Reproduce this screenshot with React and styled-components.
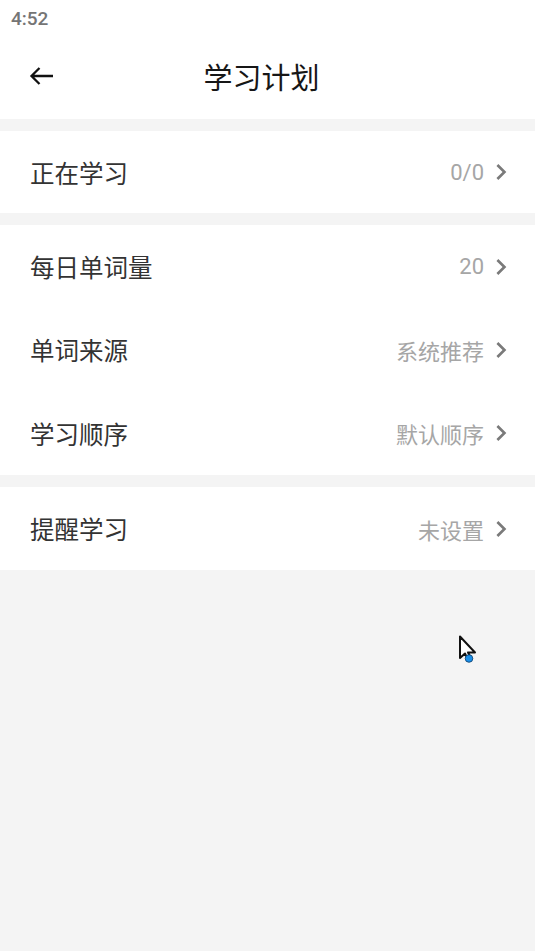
import React from 'react';
import styled, { createGlobalStyle } from 'styled-components';
import { MdChevronRight } from 'react-icons/md';

const GlobalStyle = createGlobalStyle`
  html, body {
    margin: 0;
    padding: 0;
    background: #f4f4f4;
    font-family: Roboto, "Noto Sans CJK SC", sans-serif;
  }
`;

const Page = styled.div`
  position: relative;
  width: 535px;
  min-height: 951px;
  background: #f4f4f4;
`;

const StatusBar = styled.div`
  height: 37px;
  padding-left: 11px;
  display: flex;
  align-items: center;
  background: #fff;
  color: #757575;
  font-size: 19px;
  font-weight: 500;
`;

const Header = styled.header`
  height: 82px;
  display: grid;
  grid-template-columns: 80px 1fr 92px;
  align-items: center;
  background: #fff;
  margin-bottom: 12px;
`;

const BackButton = styled.button`
  border: none;
  background: none;
  padding: 0 0 0 29px;
  display: flex;
  align-items: center;
  color: #111;
  margin-top: -4px;
`;

const Title = styled.h1`
  margin: 0 0 4px;
  text-align: center;
  font-size: 29px;
  font-weight: 400;
  color: #161616;
  font-family: "Noto Sans CJK SC", sans-serif;
`;

const Section = styled.section`
  background: #fff;
  margin-bottom: 12px;
`;

const Row = styled.div`
  height: ${(p) => p.$h || 83}px;
  display: flex;
  align-items: center;
  justify-content: space-between;
  padding: 0 18px 0 30px;
`;

const Label = styled.span`
  font-size: 24.5px;
  font-weight: 400;
  color: #333;
  font-family: "Noto Sans CJK SC", sans-serif;
`;

const Value = styled.span`
  display: flex;
  align-items: center;
  gap: 1px;
  font-size: 22px;
  color: #a6a6a6;
  font-family: Roboto, "Noto Sans CJK SC", sans-serif;
  svg {
    color: #7a7a7a;
    font-size: 32px;
  }
`;

const Cursor = styled.svg`
  position: absolute;
  left: 456px;
  top: 634px;
`;

const sections = [
  [{ label: '正在学习', value: '0/0', h: 82 }],
  [
    { label: '每日单词量', value: '20' },
    { label: '单词来源', value: '系统推荐' },
    { label: '学习顺序', value: '默认顺序', h: 84 },
  ],
  [{ label: '提醒学习', value: '未设置', h: 83 }],
];

export default function App() {
  return (
    <Page>
      <GlobalStyle />
      <StatusBar>4:52</StatusBar>
      <Header>
        <BackButton>
          <svg width="26" height="20" viewBox="0 0 26 20">
            <path d="M24 10 H2.5 M10.5 2 L2.5 10 L10.5 18" fill="none" stroke="#111" strokeWidth="2.3" />
          </svg>
        </BackButton>
        <Title>学习计划</Title>
        <div />
      </Header>
      {sections.map((rows, i) => (
        <Section key={i}>
          {rows.map((r) => (
            <Row key={r.label} $h={r.h}>
              <Label>{r.label}</Label>
              <Value>
                {r.value}
                <MdChevronRight />
              </Value>
            </Row>
          ))}
        </Section>
      ))}
      <Cursor width="26" height="32" viewBox="0 0 26 32">
        <path d="M4 2.5 L4 24 L9 19.5 L12.5 26.5 L15.5 25 L12 18.5 L19 18.5 Z" fill="#fff" stroke="#111" strokeWidth="2" strokeLinejoin="round" />
        <circle cx="13" cy="24.5" r="3.8" fill="#1a90ea" stroke="#0b3a66" strokeWidth="0.8" />
      </Cursor>
    </Page>
  );
}
